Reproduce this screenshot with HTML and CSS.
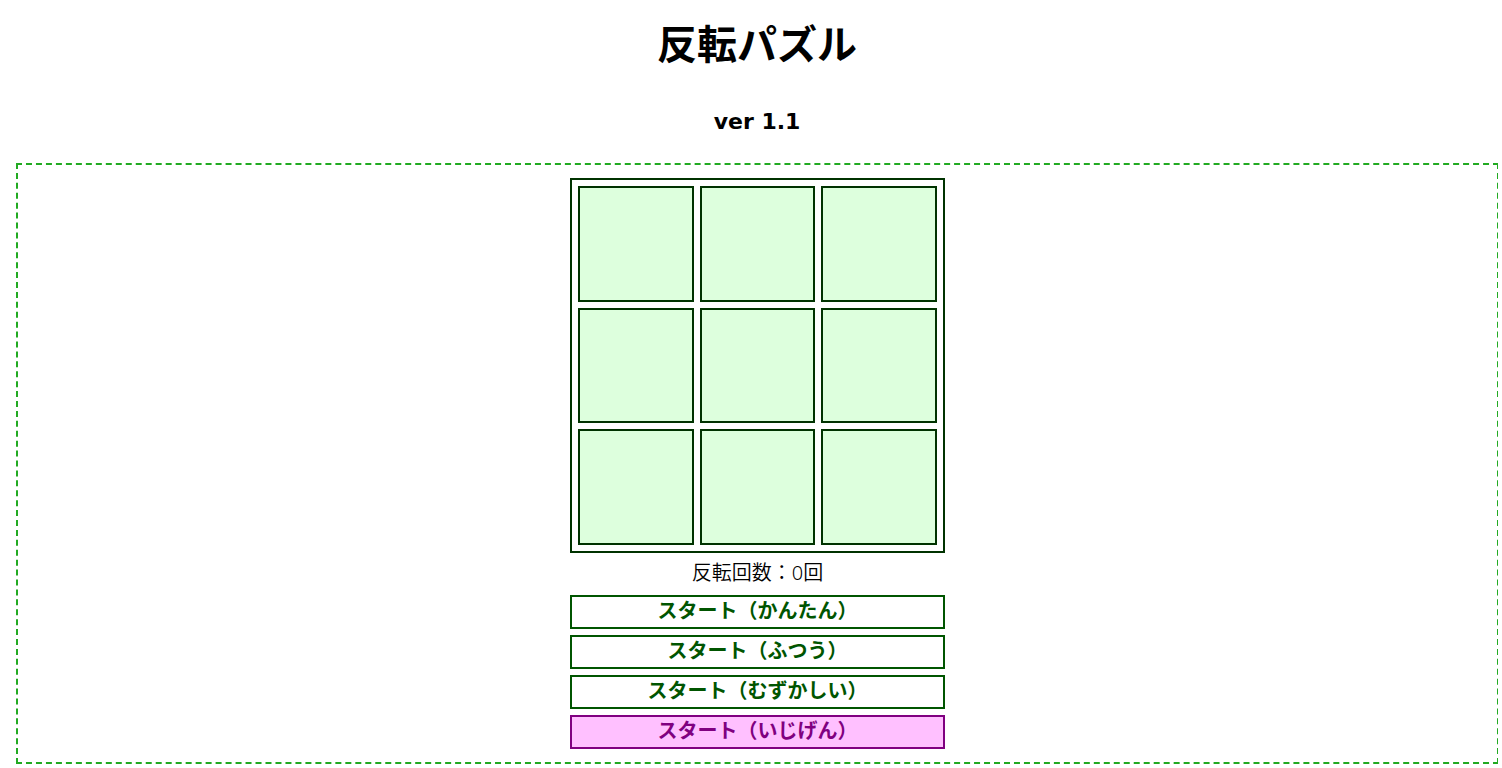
FILE: index.html
```html
<!DOCTYPE html>
<html lang="ja">
<head>
<meta charset="utf-8">
<title>反転パズル</title>
<link rel="stylesheet" href="styles.css">
</head>
<body>
<main class="page">
  <h1 class="title">反転パズル</h1>
  <h2 class="version">ver 1.1</h2>
  <section class="game">
    <div class="board">
      <button class="cell" type="button" aria-label="1行1列"></button>
      <button class="cell" type="button" aria-label="1行2列"></button>
      <button class="cell" type="button" aria-label="1行3列"></button>
      <button class="cell" type="button" aria-label="2行1列"></button>
      <button class="cell" type="button" aria-label="2行2列"></button>
      <button class="cell" type="button" aria-label="2行3列"></button>
      <button class="cell" type="button" aria-label="3行1列"></button>
      <button class="cell" type="button" aria-label="3行2列"></button>
      <button class="cell" type="button" aria-label="3行3列"></button>
    </div>
    <p class="count">反転回数：0回</p>
    <div class="levels">
      <button class="start" type="button">スタート（かんたん）</button>
      <button class="start" type="button">スタート（ふつう）</button>
      <button class="start" type="button">スタート（むずかしい）</button>
      <button class="start extra" type="button">スタート（いじげん）</button>
    </div>
  </section>
</main>
</body>
</html>
```
FILE: styles.css
```css
* {
  box-sizing: border-box;
}

body {
  margin: 0;
  background: #fff;
  color: #000;
  font-family: "Noto Sans CJK JP", sans-serif;
}

.page {
  margin: 0 4px 0 16px;
  padding-bottom: 4px;
  overflow: hidden;
  text-align: center;
}

.title {
  margin: 12px 0 0;
  font-size: 40px;
  line-height: 60px;
  font-weight: 700;
}

.version {
  margin: 32px 0 23px;
  font-family: "DejaVu Sans", "Noto Sans CJK JP", sans-serif;
  font-size: 22px;
  line-height: 36px;
  font-weight: 700;
}

.game {
  display: flex;
  flex-direction: column;
  align-items: center;
  margin-right: -1px;
  padding: 13px 12px;
  border: 2px dashed #22aa22;
}

.board {
  display: grid;
  grid-template-columns: repeat(3, 1fr);
  gap: 6px;
  width: 375px;
  max-width: 100%;
  padding: 6px;
  border: 2px solid #003300;
}

.cell {
  aspect-ratio: 1;
  padding: 0;
  border: 2px solid #003300;
  background: #ddffdd;
}

.count {
  margin: 5px 0 7px;
  font-family: "Noto Sans", "Noto Sans CJK JP", sans-serif;
  font-size: 20px;
  line-height: 30px;
  font-weight: 350;
}

.levels {
  display: flex;
  flex-direction: column;
  gap: 6px;
  width: 375px;
  max-width: 100%;
}

.start {
  padding: 0 0 4px;
  border: 2px solid #005500;
  background: #fff;
  color: #005500;
  font-family: inherit;
  font-size: 20px;
  line-height: 26px;
  font-weight: 700;
}

.extra {
  border-color: #800080;
  background: #ffc0ff;
  color: #800080;
}
```
